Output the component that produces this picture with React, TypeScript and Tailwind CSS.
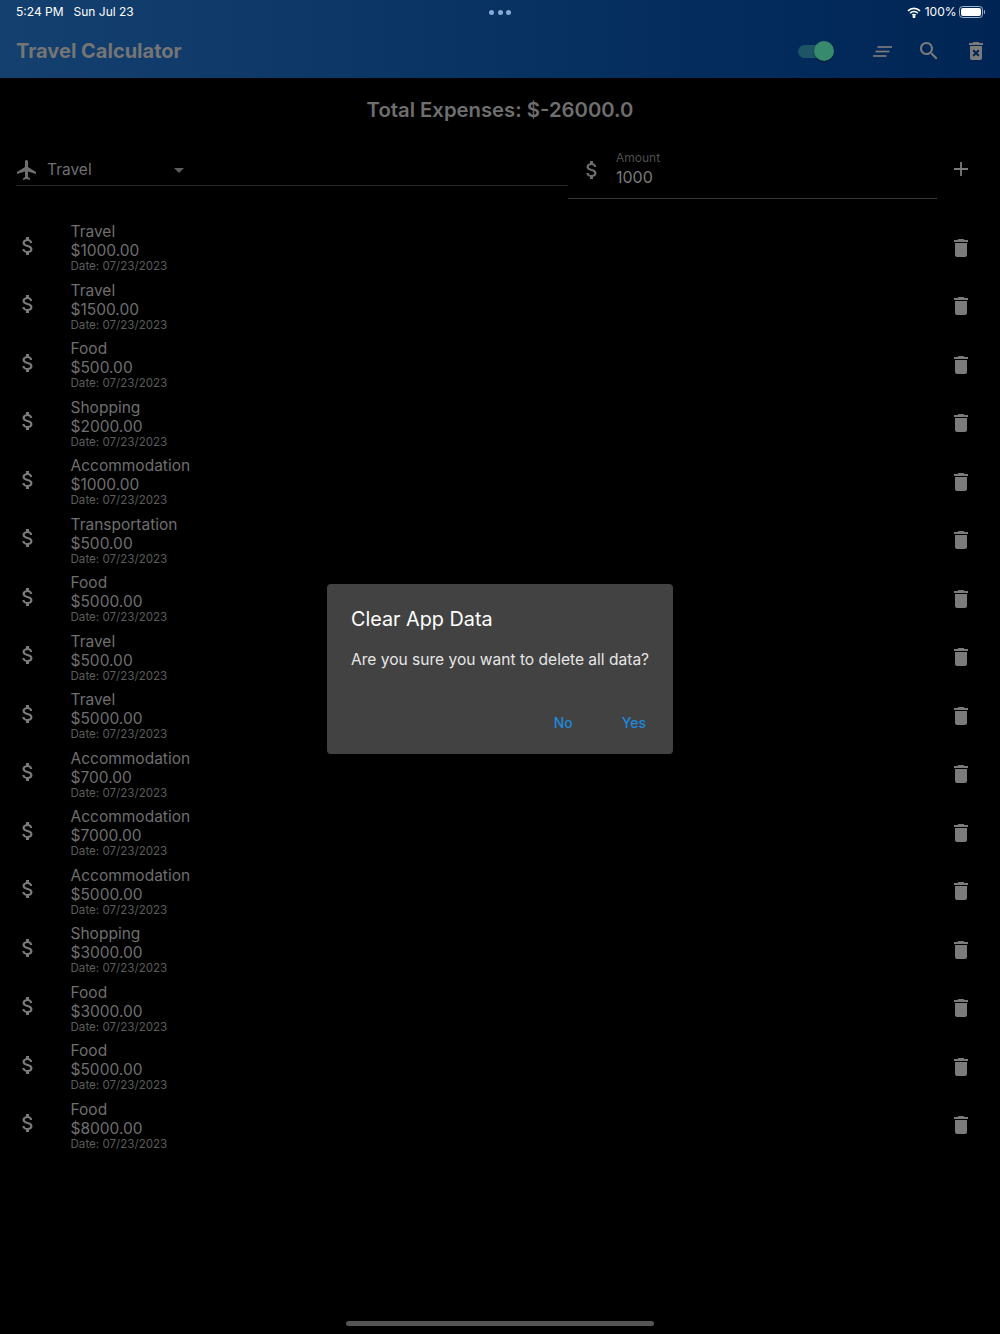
const FLIGHT = 'M21 16v-2l-8-5V3.5c0-.83-.67-1.5-1.5-1.5S10 2.67 10 3.5V9l-8 5v2l8-2.5V19l-2 1.5V22l3.5-1 3.5 1v-1.5L13 19v-5.5l8 2.5z'
const MONEY = 'M11.8 10.9c-2.27-.59-3-1.2-3-2.15 0-1.09 1.01-1.85 2.7-1.85 1.78 0 2.44.85 2.5 2.1h2.21c-.07-1.72-1.12-3.3-3.21-3.81V3h-3v2.16c-1.94.42-3.5 1.68-3.5 3.61 0 2.31 1.91 3.46 4.7 4.13 2.5.6 3 1.48 3 2.41 0 .69-.49 1.79-2.7 1.79-2.06 0-2.87-.92-2.98-2.1h-2.2c.12 2.19 1.76 3.42 3.68 3.83V21h3v-2.15c1.95-.37 3.5-1.5 3.5-3.55 0-2.84-2.43-3.81-4.7-4.4z'
const TRASH = 'M6 19c0 1.1.9 2 2 2h8c1.1 0 2-.9 2-2V7H6v12zM19 4h-3.5l-1-1h-5l-1 1H5v2h14V4z'
const TRASH_X = 'M6 19c0 1.1.9 2 2 2h8c1.1 0 2-.9 2-2V7H6v12zm2.46-7.12l1.41-1.41L12 12.59l2.12-2.12 1.41 1.41L13.41 14l2.12 2.12-1.41 1.41L12 15.41l-2.12 2.12-1.41-1.41L10.59 14l-2.13-2.12zM15.5 4l-1-1h-5l-1 1H5v2h14V4z'
const SEARCH = 'M15.5 14h-.79l-.28-.27C15.41 12.59 16 11.11 16 9.5 16 5.91 13.09 3 9.5 3S3 5.91 3 9.5 5.91 16 9.5 16c1.61 0 3.09-.59 4.23-1.57l.27.28v.79l5 4.99L20.49 19l-4.99-5zm-6 0C7.01 14 5 11.99 5 9.5S7.01 5 9.5 5 14 7.01 14 9.5 11.99 14 9.5 14z'

const expenses = [
  ['Travel', '$1000.00'],
  ['Travel', '$1500.00'],
  ['Food', '$500.00'],
  ['Shopping', '$2000.00'],
  ['Accommodation', '$1000.00'],
  ['Transportation', '$500.00'],
  ['Food', '$5000.00'],
  ['Travel', '$500.00'],
  ['Travel', '$5000.00'],
  ['Accommodation', '$700.00'],
  ['Accommodation', '$7000.00'],
  ['Accommodation', '$5000.00'],
  ['Shopping', '$3000.00'],
  ['Food', '$3000.00'],
  ['Food', '$5000.00'],
  ['Food', '$8000.00'],
]

function Icon({ d, size = 24, className = '' }: { d: string; size?: number; className?: string }) {
  return (
    <svg width={size} height={size} viewBox="0 0 24 24" fill="currentColor" className={className}>
      <path d={d} />
    </svg>
  )
}

function StatusBar() {
  return (
    <div className="relative flex h-6 items-center justify-between pl-4 pr-[15px] text-[12px] text-white">
      <div className="flex gap-[10px]">
        <span>5:24 PM</span>
        <span>Sun Jul 23</span>
      </div>
      <div className="absolute left-[489px] top-[9.5px] flex gap-[3.5px]">
        <span className="h-[5px] w-[5px] rounded-full bg-[#86a9d6]" />
        <span className="h-[5px] w-[5px] rounded-full bg-[#86a9d6]" />
        <span className="h-[5px] w-[5px] rounded-full bg-[#86a9d6]" />
      </div>
      <div className="flex items-center gap-[4px]">
        <svg width="14" height="11" viewBox="0 0 14 11" fill="none" stroke="white" strokeWidth="1.7">
          <path d="M1 3.9C4.4.6 9.6.6 13 3.9" />
          <path d="M3.2 6.2c2.2-2 5.4-2 7.6 0" />
          <path d="M5.3 8.2c1-.8 2.4-.8 3.4 0" />
          <circle cx="7" cy="9.7" r=".6" fill="white" />
        </svg>
        <span className="-mr-[1.5px]">100%</span>
        <div className="flex items-center">
          <div className="flex h-[12px] w-[24px] items-center rounded-[3.5px] border border-[#9fb2cc] p-px">
            <div className="h-full w-full rounded-[2px] bg-white" />
          </div>
          <div className="ml-px h-[4px] w-px rounded-r bg-[#9fb2cc]" />
        </div>
      </div>
    </div>
  )
}

function Header() {
  return (
    <div className="h-[78px] bg-gradient-to-r from-[#14406f] to-[#002555]">
      <StatusBar />
      <div className="flex h-[54px] items-center pl-4 pr-[12px]">
        <div className="flex-1 text-[20px] font-bold text-[#757575]">Travel Calculator</div>
        <div className="relative mr-[44px] h-[13px] w-[31px] rounded-full bg-[#1d5466]">
          <div className="absolute right-[-5px] top-[-3.5px] h-5 w-5 rounded-full bg-[#378a6d] shadow-[0_1px_2px_rgba(0,0,0,0.4)]" />
        </div>
        <svg width="19" height="11" viewBox="0 0 19 11" fill="none" stroke="#7b7b7b" strokeWidth="1.7" className="mr-[25px] mt-px">
          <path d="M4.5 1H19" />
          <path d="M2.5 5.5H16.5" />
          <path d="M0 10H13.5" />
        </svg>
        <Icon d={SEARCH} className="mr-[23px] text-[#7b7b7b]" />
        <Icon d={TRASH_X} className="text-[#7b7b7b]" />
      </div>
    </div>
  )
}

function InputRow() {
  return (
    <div className="flex h-[55px] pl-4 pr-[28px] text-[#6f6f6f]">
      <div className="flex h-[42px] w-[552px] items-center border-b border-[#2a2a2a] pt-[11px]">
        <Icon d={FLIGHT} className="-ml-[1px]" size={24} />
        <span className="ml-[8px] text-[15.5px]">Travel</span>
        <div className="ml-[82px] h-0 w-0 border-x-[5px] border-t-[5px] border-x-transparent border-t-[#5d5d5d]" />
      </div>
      <div className="flex h-[55px] w-[369px] border-b border-[#3a3a3a]">
        <Icon d={MONEY} className="ml-[12px] mt-[14px] text-[#6f6f6f]" size={24} />
        <div className="ml-[12px] mt-[6px] flex flex-col">
          <span className="text-[12px] leading-[16px] text-[#4f4f4f]">Amount</span>
          <span className="text-[16px] leading-[22px] text-[#7a7a7a]">1000</span>
        </div>
      </div>
      <svg width="16" height="16" viewBox="0 0 16 16" stroke="#7b7b7b" strokeWidth="1.8" className="ml-[15.5px] mt-[17px]">
        <path d="M8 1v14M1 8h14" />
      </svg>
    </div>
  )
}

function ExpenseRow({ title, amount }: { title: string; amount: string }) {
  return (
    <div className="flex h-[58.53px] items-center pl-[15px] pr-[27.5px]">
      <Icon d={MONEY} size={24} className="mb-[4px] ml-[1px] text-[#7b7b7b]" />
      <div className="ml-[30.5px] flex flex-1 flex-col">
        <span className="text-[15.5px] leading-[19px] text-[#6f6f6f]">{title}</span>
        <span className="text-[15.5px] leading-[19px] text-[#6f6f6f]">{amount}</span>
        <span className="text-[11.6px] leading-[13px] text-[#5c5c5c]">Date: 07/23/2023</span>
      </div>
      <Icon d={TRASH} size={24} className="text-[#7b7b7b]" />
    </div>
  )
}

function ClearDialog() {
  return (
    <div className="absolute left-[327px] top-[584px] flex h-[170px] w-[346px] flex-col rounded bg-[#424242] px-6 pt-[22px]">
      <div className="text-[19.8px] font-normal leading-[26px] text-white">Clear App Data</div>
      <div className="mt-[18px] whitespace-nowrap text-[15.55px] leading-[20px] text-[#e6e6e6]">Are you sure you want to delete all data?</div>
      <div className="mt-[42px] flex justify-end gap-[49px] pr-[3px] text-[14px] font-medium text-[#1d88dc]">
        <span>No</span>
        <span>Yes</span>
      </div>
    </div>
  )
}

export default function App() {
  return (
    <div className="relative h-[1334px] w-[1000px] overflow-hidden bg-black font-['Inter',sans-serif]">
      <Header />
      <div className="flex h-[66px] items-center justify-center pb-[2px] text-[20.3px] font-semibold text-[#6f6f6f]">Total Expenses: $-26000.0</div>
      <InputRow />
      <div className="mt-[19.5px]">
        {expenses.map(([title, amount], i) => (
          <ExpenseRow key={i} title={title} amount={amount} />
        ))}
      </div>
      <ClearDialog />
      <div className="absolute bottom-[8px] left-[346px] h-[5px] w-[308px] rounded-full bg-[#555555]" />
    </div>
  )
}
